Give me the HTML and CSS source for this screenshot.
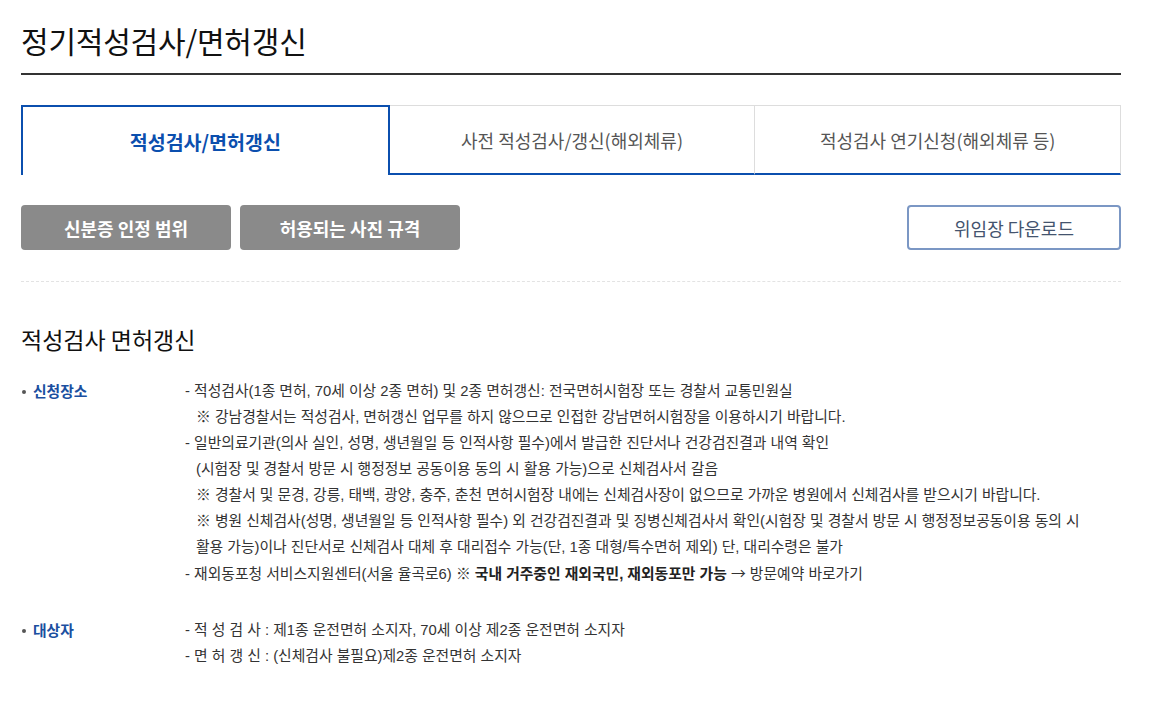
FILE: index.html
```html
<!DOCTYPE html>
<html>
	<head>
		<meta charset="utf-8">
		<title>정기적성검사/면허갱신</title>
		<link rel="stylesheet" href="styles.css">
	</head>
	<body>
		<div class="wrap">
			<h1 class="page-title">정기적성검사/면허갱신</h1>

			<ul class="tabs">
				<li class="tab on">적성검사/면허갱신</li>
				<li class="tab">사전 적성검사/갱신(해외체류)</li>
				<li class="tab">적성검사 연기신청(해외체류 등)</li>
			</ul>

			<div class="btns">
				<a class="btn gray">신분증 인정 범위</a>
				<a class="btn gray">허용되는 사진 규격</a>
				<a class="btn line">위임장 다운로드</a>
			</div>

			<h2 class="sec-title">적성검사 면허갱신</h2>

			<dl class="info">
				<dt>신청장소</dt>
				<dd>
					<p>- 적성검사(1종 면허, 70세 이상 2종 면허) 및 2종 면허갱신: 전국면허시험장 또는 경찰서 교통민원실</p>
					<p class="sub">※ 강남경찰서는 적성검사, 면허갱신 업무를 하지 않으므로 인접한 강남면허시험장을 이용하시기 바랍니다.</p>
					<p>- 일반의료기관(의사 실인, 성명, 생년월일 등 인적사항 필수)에서 발급한 진단서나 건강검진결과 내역 확인</p>
					<p class="sub">(시험장 및 경찰서 방문 시 행정정보 공동이용 동의 시 활용 가능)으로 신체검사서 갈음</p>
					<p class="sub">※ 경찰서 및 문경, 강릉, 태백, 광양, 충주, 춘천 면허시험장 내에는 신체검사장이 없으므로 가까운 병원에서 신체검사를 받으시기 바랍니다.</p>
					<p class="sub">※ 병원 신체검사(성명, 생년월일 등 인적사항 필수) 외 건강검진결과 및 징병신체검사서 확인(시험장 및 경찰서 방문 시 행정정보공동이용 동의 시<br>활용 가능)이나 진단서로 신체검사 대체 후 대리접수 가능(단, 1종 대형/특수면허 제외) 단, 대리수령은 불가</p>
					<p>- 재외동포청 서비스지원센터(서울 율곡로6) ※ <strong>국내 거주중인 재외국민, 재외동포만 가능</strong> <span class="arrow">→</span> 방문예약 바로가기</p>
				</dd>
				<dt>대상자</dt>
				<dd>
					<p>- 적 성 검 사 : 제1종 운전면허 소지자, 70세 이상 제2종 운전면허 소지자</p>
					<p>- 면 허 갱 신 : (신체검사 불필요)제2종 운전면허 소지자</p>
				</dd>
			</dl>
		</div>
	</body>
</html>
```

FILE: styles.css
```css
* {margin: 0; padding: 0;}
body {
	font-family: "Noto Sans CJK KR", "Noto Sans", sans-serif;
	color: #333;
	background: #fff;
}
ul {list-style: none;}

.wrap {
	width: 1100px;
	margin-left: 21px;
}

.page-title {
	padding: 20px 0 13px;
	font-size: 30px;
	line-height: 40px;
	font-weight: 400;
	letter-spacing: -0.2px;
	color: #111;
	border-bottom: 2px solid #333;
}

.tabs {
	display: flex;
	margin-top: 30px;
}

.tab {
	flex: 1;
	height: 70px;
	box-sizing: border-box;
	display: flex;
	align-items: center;
	justify-content: center;
	border-top: 1px solid #ddd;
	border-right: 1px solid #ddd;
	border-bottom: 2px solid #0b4fae;
	font-size: 18px;
	color: #555;
}

.tab.on {
	border: 2px solid #0b4fae;
	border-bottom: 0;
	padding-top: 1px;
	font-size: 19.5px;
	font-weight: 700;
	color: #0b4fae;
}

.btns {
	display: flex;
	gap: 9px;
	margin-top: 30px;
	padding-bottom: 31px;
	border-bottom: 1px dashed #e3e3e3;
}

.btn {
	display: flex;
	align-items: center;
	justify-content: center;
	height: 45px;
	box-sizing: border-box;
	border-radius: 4px;
	font-size: 18px;
}

.btn.gray {
	background: #8a8a8a;
	color: #fff;
	font-weight: 700;
	width: 210px;
}

.btn.gray + .btn.gray {
	width: 220px;
}

.btn.line {
	margin-left: auto;
	width: 214px;
	border: 2px solid #7b97c4;
	color: #44546e;
}

.sec-title {
	margin-top: 42px;
	font-size: 23px;
	line-height: 30px;
	font-weight: 400;
	color: #111;
}

.info {
	display: grid;
	grid-template-columns: 164px 1fr;
	row-gap: 30px;
	margin-top: 24px;
	font-family: "Liberation Sans", "Noto Sans CJK KR", sans-serif;
	font-size: 14.8px;
	line-height: 26px;
}

.info dt {
	position: relative;
	padding-left: 12px;
	font-family: "Noto Sans CJK KR", sans-serif;
	font-size: 14.8px;
	font-weight: 700;
	color: #1b4f9f;
}

.info dt::before {
	content: "";
	position: absolute;
	left: 1px;
	top: 12px;
	width: 4px;
	height: 4px;
	border-radius: 50%;
	background: #555;
}

.info .sub {
	padding-left: 11px;
}

.info strong {
	color: #222;
}

.info .arrow {
	font-family: "Noto Sans CJK KR", sans-serif;
}
```
